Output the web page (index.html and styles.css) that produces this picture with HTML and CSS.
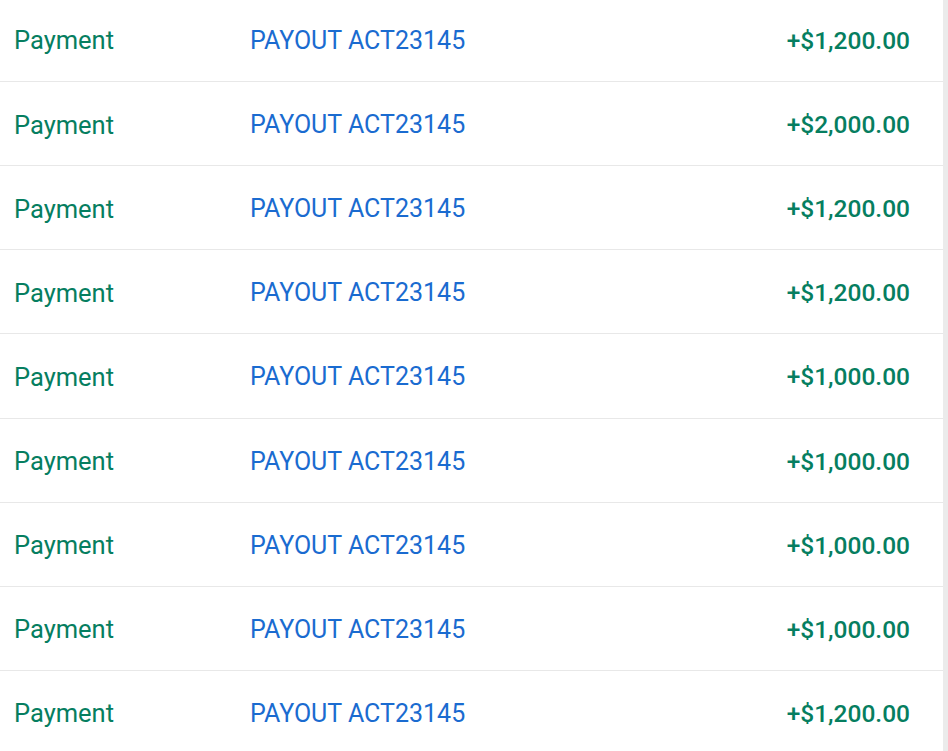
FILE: index.html
```html
<!DOCTYPE html>
<html>
<head>
<meta charset="utf-8">
<link rel="stylesheet" href="styles.css">
</head>
<body>
<div class="frame">
  <div class="list">
    <div class="row"><span class="type">Payment</span><span class="ref">PAYOUT ACT23145</span><span class="amount">+$1,200.00</span></div>
    <div class="row"><span class="type">Payment</span><span class="ref">PAYOUT ACT23145</span><span class="amount">+$2,000.00</span></div>
    <div class="row"><span class="type">Payment</span><span class="ref">PAYOUT ACT23145</span><span class="amount">+$1,200.00</span></div>
    <div class="row"><span class="type">Payment</span><span class="ref">PAYOUT ACT23145</span><span class="amount">+$1,200.00</span></div>
    <div class="row"><span class="type">Payment</span><span class="ref">PAYOUT ACT23145</span><span class="amount">+$1,000.00</span></div>
    <div class="row"><span class="type">Payment</span><span class="ref">PAYOUT ACT23145</span><span class="amount">+$1,000.00</span></div>
    <div class="row"><span class="type">Payment</span><span class="ref">PAYOUT ACT23145</span><span class="amount">+$1,000.00</span></div>
    <div class="row"><span class="type">Payment</span><span class="ref">PAYOUT ACT23145</span><span class="amount">+$1,000.00</span></div>
    <div class="row"><span class="type">Payment</span><span class="ref">PAYOUT ACT23145</span><span class="amount">+$1,200.00</span></div>
  </div>
  <div class="scrollbar"></div>
</div>
</body>
</html>
```
FILE: styles.css
```css
html, body {
  margin: 0;
  padding: 0;
  background: #ffffff;
}
.frame {
  display: flex;
  height: 751px;
  overflow: hidden;
  font-family: Roboto, "Liberation Sans", sans-serif;
  font-size: 25px;
}
.list {
  flex: 1;
  margin-top: -2.14px;
}
.row {
  box-sizing: border-box;
  height: 84.14px;
  display: grid;
  grid-template-columns: 236px 1fr auto;
  align-items: center;
  padding: 2px 33px 0 14px;
  border-bottom: 1px solid #e8e8e8;
}
.type {
  color: #067e60;
  font-size: 25.5px;
}
.ref {
  color: #1a6bd0;
}
.amount {
  color: #067e60;
  font-weight: 500;
  font-size: 24.5px;
}
.scrollbar {
  width: 5px;
  background: #ebebeb;
}
```
